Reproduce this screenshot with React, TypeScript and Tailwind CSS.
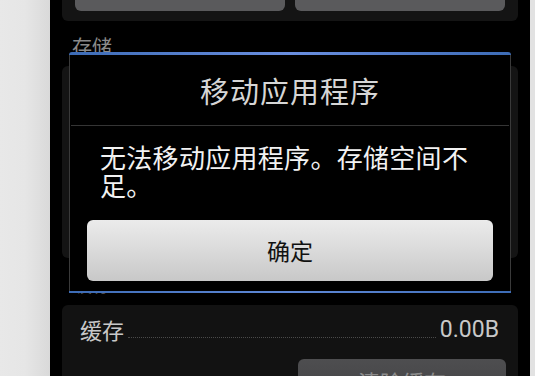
import React from 'react';

const font = { fontFamily: '"Noto Sans CJK SC", "Noto Sans", sans-serif' };

function DialogButton({ label }: { label: string }) {
  return (
    <button className="mx-[17px] mt-[21px] flex h-[61px] items-center justify-center rounded-[6px] bg-gradient-to-b from-[#ebebeb] via-[#dadada] to-[#c8c8c8] text-[23px] text-[#111]">
      {label}
    </button>
  );
}

export default function App() {
  return (
    <div className="flex h-[376px] w-[535px] overflow-hidden bg-[#e6e6e6]" style={font}>
      {/* left margin of the device frame */}
      <div className="w-[50px] shrink-0 bg-gradient-to-r from-[#e8e8e8] via-[#e6e6e6] to-[#d9d9d9]" />

      {/* phone screen */}
      <div className="relative w-[480px] shrink-0 overflow-hidden bg-black">
        {/* settings page below the dialog */}
        <div className="flex flex-col px-[12px]">
          <div className="-mt-[40px] grid grid-cols-2 gap-[10px] rounded-[6px] bg-[#141414] px-[13px] pb-[10px] pt-[10px]">
            <div className="h-[41px] rounded-[6px] bg-[#5a5a5c]" />
            <div className="h-[41px] rounded-[6px] bg-[#5a5a5c]" />
          </div>

          <div className="mt-[14px] pl-[10px] text-[20px] leading-[24px] text-[#8a8a8a]">存储</div>

          <div className="mt-[7px] h-[192px] rounded-[6px] bg-[#141414]" />

          <div className="mt-[14px] pl-[10px] text-[20px] leading-[24px] text-[#8a8a8a]">缓存</div>

          <div className="mt-[9px] flex flex-col rounded-[6px] bg-[#121212] pl-[18px] pr-[12px] pt-[10px]">
            <div className="flex items-end text-[22px] leading-[28px] text-[#c8c8c8]">
              <span>缓存</span>
              <span className="mx-[4px] mb-[5px] flex-1 border-b border-dotted border-[#4a4a4a]" />
              <span className="pr-[7px] text-[23px] leading-[26px]" style={{ fontFamily: 'Roboto, "Noto Sans CJK SC", sans-serif' }}>
                0.00B
              </span>
            </div>
            <div className="mt-[16px] flex justify-end">
              <div className="flex h-[48px] w-[208px] items-start justify-center rounded-[6px] bg-gradient-to-b from-[#4e4e50] to-[#404042] pt-[6px] text-[22px] text-[#8c8c8c]">
                清除缓存
              </div>
            </div>
          </div>
        </div>

        {/* alert dialog */}
        <div className="absolute left-[19px] top-[52px] flex w-[442px] flex-col bg-black">
          <div className="h-[3px] rounded-t-[3px] bg-gradient-to-r from-[#3d6cb6] via-[#6a8fe0] to-[#3d6cb6]" />
          <div className="flex flex-col border-x border-[#3a3a3a]">
            <div className="flex h-[70px] items-center justify-center pt-[2px] text-[29px] tracking-[1px] text-[#d6d6d6]">
              移动应用程序
            </div>
            <div className="mx-[1px] h-px bg-[#353535]" />
            <p className="pl-[30px] pr-[20px] pt-[17px] text-[26px] leading-[28px] tracking-[0.3px] text-[#f2f2f2]">
              无法移动应用程序。存储空间不足。
            </p>
            <DialogButton label="确定" />
            <div className="h-[10px]" />
          </div>
          <div className="h-[2px] bg-gradient-to-r from-[#3d6cb6] via-[#5f88d6] to-[#3d6cb6]" />
        </div>
      </div>

      <div className="flex-1 bg-[#e2e2e2]" />
    </div>
  );
}
